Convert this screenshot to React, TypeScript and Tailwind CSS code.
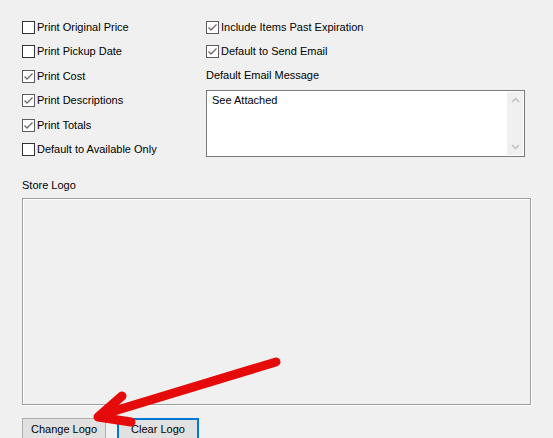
import React, { useState } from 'react';

const font = { fontFamily: '"Liberation Sans", Arial, sans-serif' };

interface CheckRowProps {
  label: string;
  checked: boolean;
  onToggle: () => void;
}

const CheckRow: React.FC<CheckRowProps> = ({ label, checked, onToggle }) => (
  <label className="flex items-center h-[13px] cursor-default select-none" onClick={onToggle}>
    <span
      className={`w-[13px] h-[13px] bg-white border flex items-center justify-center shrink-0 ${
        checked ? 'border-[#5c5c5c]' : 'border-[#333333]'
      }`}
    >
      {checked && (
        <svg width="11" height="11" viewBox="0 0 11 11">
          <path d="M1.5 5.5 L4 8 L9.5 2.5" fill="none" stroke="#6a6a6a" strokeWidth="1.3" />
        </svg>
      )}
    </span>
    <span className="ml-[2px] text-[11px] leading-[13px] text-black">{label}</span>
  </label>
);

const App: React.FC = () => {
  const [opts, setOpts] = useState<Record<string, boolean>>({
    originalPrice: false,
    pickupDate: false,
    cost: true,
    descriptions: true,
    totals: true,
    availableOnly: false,
    pastExpiration: true,
    sendEmail: true,
  });
  const [message, setMessage] = useState('See Attached');

  const toggle = (key: string) => () => setOpts(prev => ({ ...prev, [key]: !prev[key] }));

  const leftOptions = [
    { key: 'originalPrice', label: 'Print Original Price' },
    { key: 'pickupDate', label: 'Print Pickup Date' },
    { key: 'cost', label: 'Print Cost' },
    { key: 'descriptions', label: 'Print Descriptions' },
    { key: 'totals', label: 'Print Totals' },
    { key: 'availableOnly', label: 'Default to Available Only' },
  ];

  return (
    <div className="relative w-[553px] h-[438px] overflow-hidden bg-[#f0f0f0] pl-[22px]" style={font}>
      <div className="flex pt-[21px]">
        {/* left column of print options */}
        <div className="w-[184px] flex flex-col gap-[11.4px]">
          {leftOptions.map(o => (
            <CheckRow key={o.key} label={o.label} checked={opts[o.key]} onToggle={toggle(o.key)} />
          ))}
        </div>

        {/* right column: email options */}
        <div className="w-[319px] flex flex-col">
          <div className="flex flex-col gap-[11px]">
            <CheckRow label="Include Items Past Expiration" checked={opts.pastExpiration} onToggle={toggle('pastExpiration')} />
            <CheckRow label="Default to Send Email" checked={opts.sendEmail} onToggle={toggle('sendEmail')} />
          </div>
          <div className="mt-[11px] text-[11px] leading-[13px] text-black">Default Email Message</div>
          <div className="mt-[8px] h-[67px] bg-white border border-[#7a7a7a] flex">
            <textarea
              value={message}
              onChange={e => setMessage(e.target.value)}
              className="flex-1 resize-none outline-none bg-white text-[11px] leading-[13px] text-black pl-[5px] pt-[3px]"
              style={font}
            />
            <div className="w-[16px] my-[1px] mr-[1px] bg-[#f0f0f0] flex flex-col items-center justify-between py-[5px]">
              <svg width="9" height="6" viewBox="0 0 9 6">
                <path d="M1 5 L4.5 1.5 L8 5" fill="none" stroke="#c2c2c2" strokeWidth="1.6" />
              </svg>
              <svg width="9" height="6" viewBox="0 0 9 6">
                <path d="M1 1 L4.5 4.5 L8 1" fill="none" stroke="#c2c2c2" strokeWidth="1.6" />
              </svg>
            </div>
          </div>
        </div>
      </div>

      {/* logo preview */}
      <div className="mt-[22px] text-[11px] leading-[13px] text-black">Store Logo</div>
      <div className="mt-[6px] w-[509px] h-[207px] border border-[#a0a0a0] shadow-[1px_1px_0_#ffffff,inset_1px_1px_0_#ffffff]" />

      <div className="mt-[13px] flex gap-[11px]">
        <button className="w-[84px] h-[23px] bg-[#e1e1e1] border border-[#adadad] text-[11px] text-black" style={font}>
          Change Logo
        </button>
        <button className="w-[82px] h-[23px] bg-[#e1e1e1] border-2 border-[#0078d7] text-[11px] text-black" style={font}>
          Clear Logo
        </button>
      </div>

      {/* callout arrow */}
      <svg className="absolute left-0 top-0 pointer-events-none" width="553" height="438" viewBox="0 0 553 438">
        <g stroke="#e60b0b" strokeWidth="9" strokeLinecap="round" strokeLinejoin="round" fill="none">
          <path d="M276 362 L101 415" />
          <path d="M122 396 L98 417 L131 422" />
        </g>
      </svg>
    </div>
  );
};

export default App;
